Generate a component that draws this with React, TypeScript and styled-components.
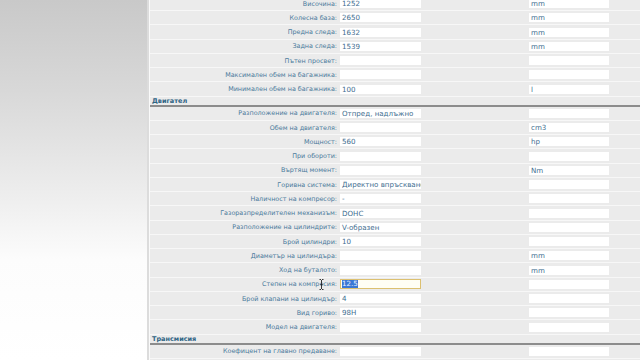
import React from "react";
import styled, { createGlobalStyle } from "styled-components";

const GlobalStyle = createGlobalStyle`
  html, body { margin: 0; padding: 0; overflow: hidden; background: #fff; }
  body { font-family: "DejaVu Sans", Verdana, sans-serif; }
`;

const Page = styled.div`
  display: flex;
  width: 640px;
  height: 360px;
  overflow: hidden;
  position: relative;
`;

const Sidebar = styled.div`
  width: 147px;
  flex-shrink: 0;
  background: linear-gradient(180deg, #c9c9c9 0%, #d8d8d8 25%, #eeeeee 55%, #fcfcfc 72%, #ffffff 100%);
`;

const Panel = styled.div`
  flex: 1;
  background: #ebebeb;
  border-left: 2px solid #dcdcdc;
  box-shadow: inset 1px 0 0 #fafafa;
  padding-left: 1px;
  overflow: hidden;
`;

const Content = styled.div`
  margin-top: -3.1px;
`;

const Row = styled.div`
  display: grid;
  grid-template-columns: 190px 81px 108px 80px 1fr;
  align-items: center;
  height: 14.25px;
  box-sizing: border-box;
  border-bottom: 1px solid #f7f7f7;
`;

const Label = styled.div`
  text-align: right;
  padding-right: 3px;
  font-size: 6.4px;
  color: #4a7a9b;
  white-space: nowrap;
  overflow: hidden;
`;

const Field = styled.div<{ $focused?: boolean }>`
  height: ${(p) => (p.$focused ? "10px" : "9px")};
  box-sizing: border-box;
  background: ${(p) => (p.$focused ? "#fffef4" : "#ffffff")};
  border: ${(p) => (p.$focused ? "1px solid #dcc070" : "none")};
  padding-left: ${(p) => (p.$focused ? "1px" : "2px")};
  font-size: 7.1px;
  line-height: ${(p) => (p.$focused ? "8px" : "9px")};
  color: #3f6e90;
  white-space: nowrap;
  overflow: hidden;
`;

const Selected = styled.span`
  background: #3b78d4;
  color: #e8f0ff;
`;

const SectionHeader = styled.div`
  height: 10px;
  box-sizing: border-box;
  border-bottom: 2px solid #8c8c8c;
  padding-left: 2px;
  font-size: 6.5px;
  font-weight: bold;
  line-height: 8px;
  color: #2e6383;
`;

const Cursor = styled.svg`
  position: absolute;
  left: 319px;
  top: 279px;
  width: 5px;
  height: 11px;
  pointer-events: none;
`;

type Item = { label: string; value?: string; unit?: string; selected?: boolean };

const dims: Item[] = [
  { label: "Височина:", value: "1252", unit: "mm" },
  { label: "Колесна база:", value: "2650", unit: "mm" },
  { label: "Предна следа:", value: "1632", unit: "mm" },
  { label: "Задна следа:", value: "1539", unit: "mm" },
  { label: "Пътен просвет:" },
  { label: "Максимален обем на багажника:" },
  { label: "Минимален обем на багажника:", value: "100", unit: "l" },
];

const engine: Item[] = [
  { label: "Разположение на двигателя:", value: "Отпред, надлъжно" },
  { label: "Обем на двигателя:", unit: "cm3" },
  { label: "Мощност:", value: "560", unit: "hp" },
  { label: "При обороти:" },
  { label: "Въртящ момент:", unit: "Nm" },
  { label: "Горивна система:", value: "Директно впръскване" },
  { label: "Наличност на компресор:", value: "-" },
  { label: "Газоразпределителен механизъм:", value: "DOHC" },
  { label: "Разположение на цилиндрите:", value: "V-образен" },
  { label: "Брой цилиндри:", value: "10" },
  { label: "Диаметър на цилиндъра:", unit: "mm" },
  { label: "Ход на буталото:", unit: "mm" },
  { label: "Степен на компресия:", value: "12.5", selected: true },
  { label: "Брой клапани на цилиндър:", value: "4" },
  { label: "Вид гориво:", value: "98H" },
  { label: "Модел на двигателя:" },
];

const transmission: Item[] = [{ label: "Коефицент на главно предаване:" }];

const SpecRow: React.FC<{ item: Item }> = ({ item }) => (
  <Row>
    <Label>{item.label}</Label>
    <Field $focused={item.selected}>
      {item.selected ? <Selected>{item.value}</Selected> : item.value}
    </Field>
    <span />
    <Field>{item.unit}</Field>
    <span />
  </Row>
);

export default function App() {
  return (
    <>
      <GlobalStyle />
      <Page>
        <Sidebar />
        <Panel>
          <Content>
            {dims.map((d) => (
              <SpecRow key={d.label} item={d} />
            ))}
            <SectionHeader>Двигател</SectionHeader>
            {engine.map((d) => (
              <SpecRow key={d.label} item={d} />
            ))}
            <SectionHeader>Трансмисия</SectionHeader>
            {transmission.map((d) => (
              <SpecRow key={d.label} item={d} />
            ))}
          </Content>
        </Panel>
        <Cursor viewBox="0 0 5 11">
          <path d="M0.5 0.5 H2 M3 0.5 H4.5 M2.5 1 V10 M0.5 10.5 H2 M3 10.5 H4.5 M1.5 5.5 H3.5" stroke="#222" strokeWidth="0.9" fill="none" />
        </Cursor>
      </Page>
    </>
  );
}
